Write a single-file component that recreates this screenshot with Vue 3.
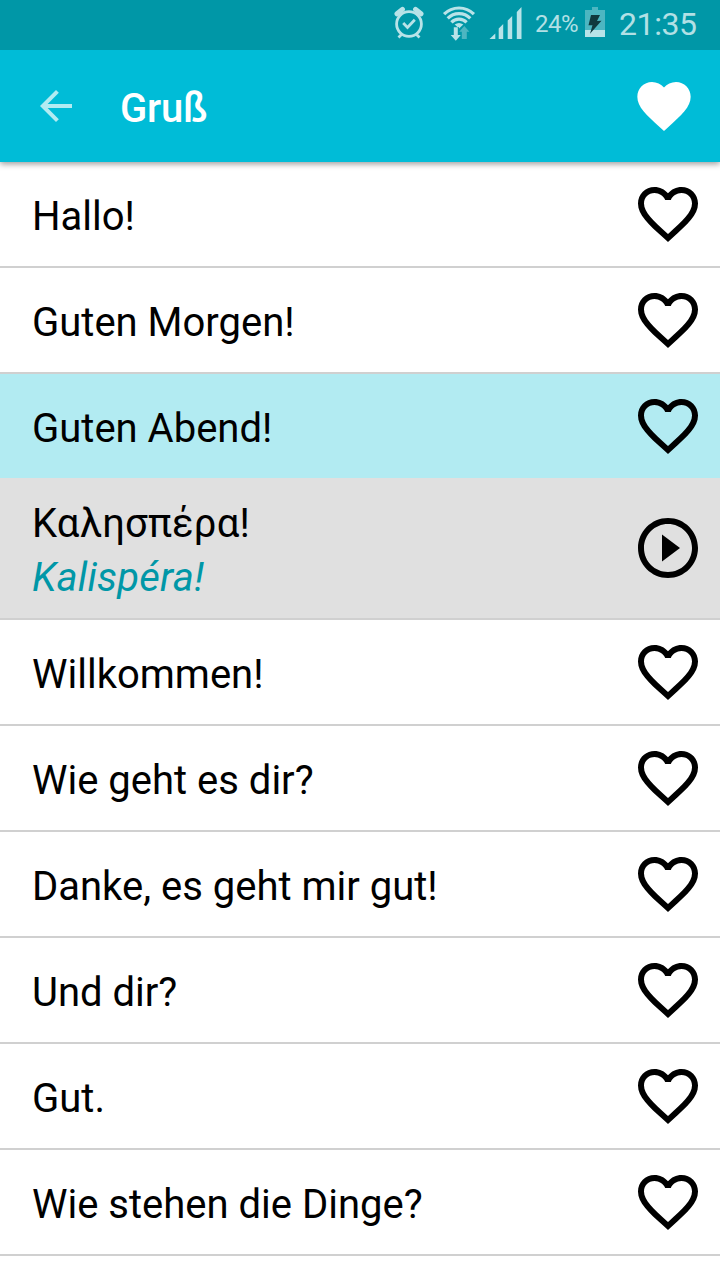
<template>
  <div class="app">
    <div class="status-bar">
      <svg class="alarm" width="32" height="34" viewBox="0 0 32 34">
        <circle cx="16" cy="18" r="12.4" />
        <path d="M10.2 17l4.3 4.4 7.3-7.6" />
        <path d="M8.5 28.5l-3 3M23.5 28.5l3 3" />
        <path class="bell" d="M4 7.8l5.4-4.4M28 7.8l-5.4-4.4" />
      </svg>
      <svg class="wifi" width="34" height="36" viewBox="0 0 34 36">
        <path class="arc" d="M2.1 8.2a21 21 0 0 1 29.8 0" />
        <path class="arc" d="M5.7 12.3a15.8 15.8 0 0 1 22.6 0" />
        <path class="arc" d="M9.4 16.3a10.8 10.8 0 0 1 15.2 0" />
        <path class="solid" d="M12.7 18.6q4.3-3.4 8.6 0L17 22.6z" />
        <path class="gap" d="M10.9 21h5.9v8H10.9z" />
        <path class="solid" d="M11.8 21.3h4V29h3l-5 5.8L8.7 29h3.1z" />
        <path class="up" d="M19.8 33v-7.2h-2.6l5.1-5.8 5.1 5.8h-2.6V33z" />
      </svg>
      <svg class="signal" width="34" height="34" viewBox="0 0 34 34">
        <path d="M.5 33l5.8-5.5V33zM9.7 22.5l4.5-4.5v15H9.7zM18.7 14.5l4.5-4.5v23h-4.5zM27.8 6l4.7-5v32h-4.7z" />
      </svg>
      <span class="percent">24%</span>
      <svg class="battery" width="20" height="30" viewBox="0 0 20 30">
        <path class="case" d="M0 3h7V0h6v3h7v20H0z" />
        <path class="charge" d="M0 23h20v7H0z" />
        <path class="bolt" d="M6 8h9l-3 6 4.5-.3L5 26.8l2.5-8.5H3.5z" />
      </svg>
      <span class="clock">21:35</span>
    </div>

    <header class="toolbar">
      <svg class="back" width="48" height="48" viewBox="0 0 24 24">
        <path d="M20 11H7.83l5.59-5.59L12 4l-8 8 8 8 1.41-1.41L7.83 13H20v-2z" />
      </svg>
      <h1>Gruß</h1>
      <svg class="favorites" width="64" height="64" viewBox="0 0 24 24">
        <path d="M12 21.35l-1.45-1.32C5.4 15.36 2 12.28 2 8.5 2 5.42 4.42 3 7.5 3c1.74 0 3.41.81 4.5 2.09C13.09 3.81 14.76 3 16.5 3 19.58 3 22 5.42 22 8.5c0 3.78-3.4 6.86-8.55 11.54L12 21.35z" />
      </svg>
    </header>

    <ul class="phrases">
      <li v-for="(phrase, index) in phrases" :key="phrase.text">
        <div class="row" :class="{ active: index === selected }" @click="toggle(index)">
          <span>{{ phrase.text }}</span>
          <svg width="72" height="72" viewBox="0 0 24 24">
            <path :d="heart" />
          </svg>
        </div>
        <div v-if="index === selected && phrase.greek" class="detail">
          <div class="translation">
            <p>{{ phrase.greek }}</p>
            <p class="latin">{{ phrase.latin }}</p>
          </div>
          <svg width="72" height="72" viewBox="0 0 24 24">
            <path d="M10 16.5l6-4.5-6-4.5v9zM12 2C6.48 2 2 6.48 2 12s4.48 10 10 10 10-4.48 10-10S17.52 2 12 2zm0 18c-4.41 0-8-3.59-8-8s3.59-8 8-8 8 3.59 8 8-3.59 8-8 8z" />
          </svg>
        </div>
      </li>
    </ul>
  </div>
</template>

<script setup>
import { ref } from "vue";

const heart =
  "M16.5 3c-1.74 0-3.41.81-4.5 2.09C10.91 3.81 9.24 3 7.5 3 4.42 3 2 5.42 2 8.5c0 3.78 3.4 6.86 8.55 11.54L12 21.35l1.45-1.32C18.6 15.36 22 12.28 22 8.5 22 5.42 19.58 3 16.5 3zm-4.4 15.55l-.1.1-.1-.1C7.14 14.24 4 11.39 4 8.5 4 6.5 5.5 5 7.5 5c1.54 0 3.04.99 3.57 2.36h1.87C13.46 5.99 14.96 5 16.5 5c2 0 3.5 1.5 3.5 3.5 0 2.89-3.14 5.74-7.9 10.05z";

const phrases = [
  { text: "Hallo!" },
  { text: "Guten Morgen!" },
  { text: "Guten Abend!", greek: "Καλησπέρα!", latin: "Kalispéra!" },
  { text: "Willkommen!" },
  { text: "Wie geht es dir?" },
  { text: "Danke, es geht mir gut!" },
  { text: "Und dir?" },
  { text: "Gut." },
  { text: "Wie stehen die Dinge?" },
];

const selected = ref(2);

const toggle = (index) => {
  selected.value = selected.value === index ? -1 : index;
};
</script>

<style>
body {
  margin: 0;
  background: #fff;
}
</style>

<style scoped>
.app {
  height: 1280px;
  overflow: hidden;
  font-family: Roboto, "Liberation Sans", sans-serif;
  color: #000;
  background: #fff;
}

svg {
  display: block;
  flex: none;
}

.status-bar {
  position: relative;
  z-index: 2;
  display: flex;
  justify-content: flex-end;
  align-items: flex-start;
  height: 50px;
  box-sizing: border-box;
  padding: 6px 22px 0 0;
  background: #0097a7;
  color: #b2e0e5;
  fill: #b8e3e8;
}

.alarm {
  fill: none;
  stroke: #b8e3e8;
  stroke-width: 2.8;
}

.alarm .bell {
  stroke-width: 5;
  stroke-linecap: round;
}

.wifi {
  margin-left: 17px;
}

.wifi .arc {
  fill: none;
  stroke: #b8e3e8;
  stroke-width: 3.2;
}

.wifi .gap {
  fill: #0097a7;
}

.wifi .up {
  fill: #4db6c1;
}

.signal {
  margin-left: 13px;
}

.percent {
  width: 44px;
  margin: 4px 6px 0 12px;
  font-size: 24px;
  line-height: 28px;
  letter-spacing: -0.5px;
}

.battery {
  margin-top: 1px;
}

.battery .case {
  fill: #4db6c1;
}

.battery .bolt {
  fill: #10393e;
}

.clock {
  width: 79px;
  margin-left: 14px;
  font-size: 32px;
  line-height: 36px;
  letter-spacing: -0.4px;
}

.toolbar {
  position: relative;
  display: flex;
  align-items: center;
  height: 112px;
  box-sizing: border-box;
  padding: 0 24px 0 32px;
  background: #00bcd7;
  box-shadow: 0 2px 6px rgba(0, 0, 0, 0.4);
}

.back {
  fill: #b2ebf2;
}

h1 {
  flex: 1;
  margin: 6px 0 0 40px;
  font-size: 40px;
  font-weight: 500;
  line-height: 48px;
  letter-spacing: -0.2px;
  color: #fff;
}

.favorites {
  fill: #fff;
}

.phrases {
  margin: 0;
  padding: 0;
  list-style: none;
}

li {
  border-bottom: 2px solid #d0d0d0;
}

.row,
.detail {
  display: flex;
  justify-content: space-between;
  align-items: center;
  box-sizing: border-box;
  padding: 0 16px 0 32px;
  font-size: 40px;
}

.row {
  height: 104px;
  line-height: 48px;
}

.row span {
  padding-top: 6px;
}

.row.active {
  background: #b2ebf2;
}

.detail {
  height: 140px;
  background: #e0e0e0;
}

.translation {
  padding-top: 6px;
  letter-spacing: 0.2px;
}

.detail p {
  margin: 0;
  line-height: 54px;
}

.detail .latin {
  font-style: italic;
  color: #0097a7;
}
</style>
